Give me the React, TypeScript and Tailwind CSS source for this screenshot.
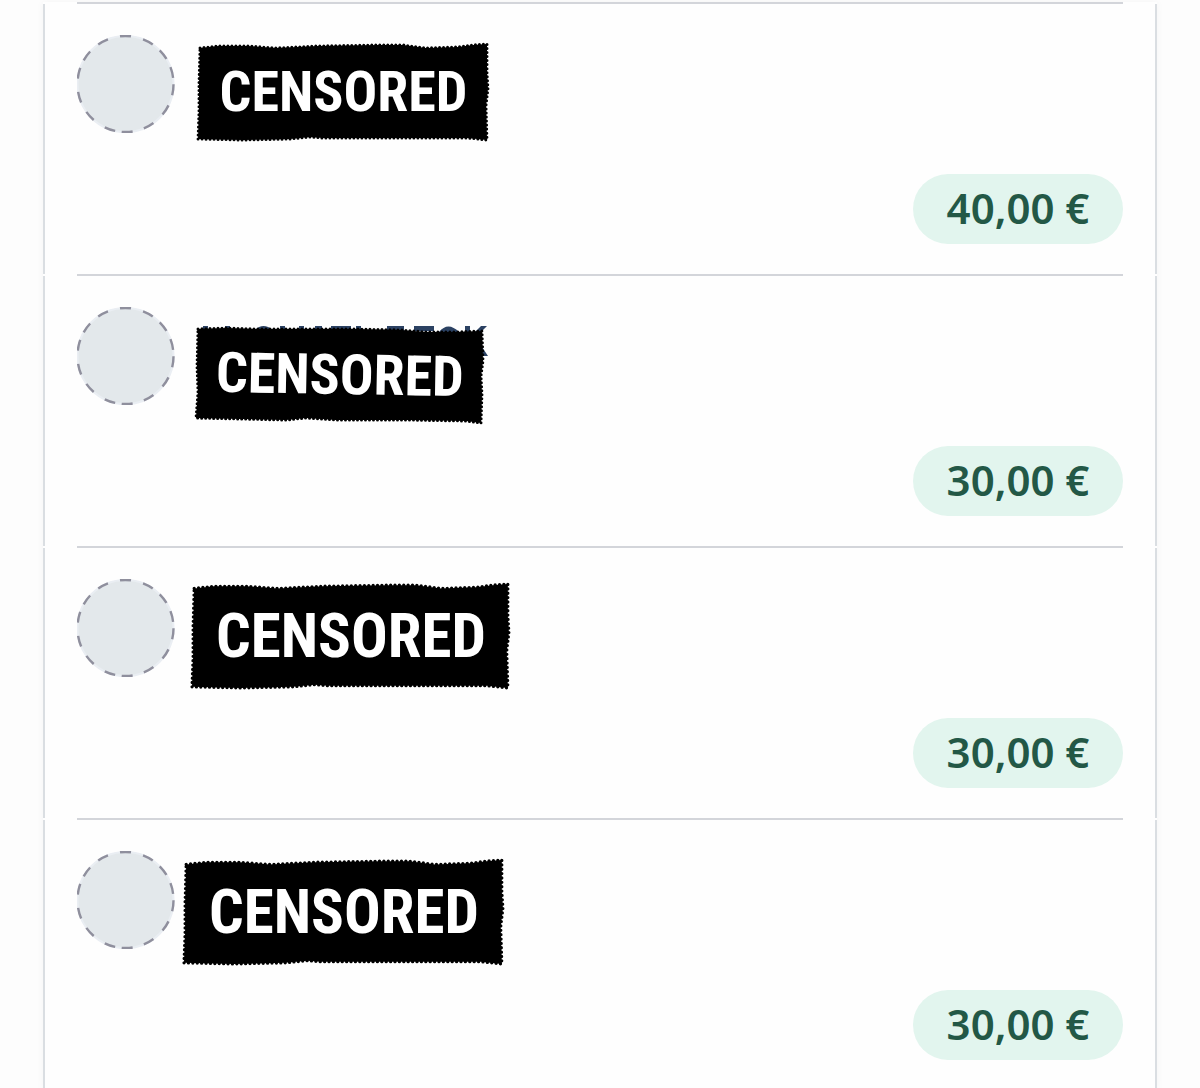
type Entry = {
  amount: string;
  patch: string;
  label: string;
  exposed?: boolean;
};

const entries: Entry[] = [
  { amount: "40,00 €", patch: "mt-[41px] ml-[23px] h-[98px] w-[291px]", label: "text-[56px]" },
  { amount: "30,00 €", patch: "mt-[52px] ml-[21px] h-[98px] w-[288px]", label: "text-[56px] rotate-1", exposed: true },
  { amount: "30,00 €", patch: "mt-[37px] ml-[17px] h-[106px] w-[318px]", label: "text-[61px]" },
  { amount: "30,00 €", patch: "mt-[41px] ml-[9px] h-[106px] w-[320px]", label: "text-[61px]" },
];

const straightPatch =
  "M2 5 L20 3 L50 3 L78 5 L120 3 L180 2 L205 2 L228 5 L260 4 L275 2 L289 1 L289 30 L290 45 L288 62 L289 96 L270 94 L210 94 L125 94 L112 93 L92 95 L45 96 L0 95 L1 68 L1 40 Z";
const tiltedPatch =
  "M2 3 L30 2 L60 3 L105 3 L160 3 L205 4 L230 6 L260 6 L286 5 L287 35 L285 50 L286 68 L285 97 L270 95 L210 94 L140 94 L110 92 L90 94 L45 93 L0 92 L2 66 L1 40 Z";

function Patch({ className, label, exposed }: { className: string; label: string; exposed?: boolean }) {
  const d = exposed ? tiltedPatch : straightPatch;
  return (
    <div className={`relative flex shrink-0 items-center justify-center ${className}`}>
      {exposed && (
        <svg
          className="absolute inset-0 h-full w-full overflow-visible"
          viewBox="0 0 288 98"
          fill="#2b4162"
          aria-hidden="true"
        >
          <path d="M7 0h5v4h-5zM29 0h5v4h-5zM59 4q8-8 18 0zM84 0h5v5h-5zM103 0h5v5h-5zM119 0h7v5h-7zM135 0h20v4h-20zM160 0h5v5h-5zM191 0h17v5h-17zM218 0h20v5h-20zM243 6q9-11 20 0zM269 0h5v6h-5zM285 0h6l-6 6h-6zM284 18l8 12h-6l-4-6z" />
        </svg>
      )}
      <svg
        className="absolute inset-0 h-full w-full overflow-visible"
        viewBox={exposed ? "0 0 288 98" : "0 0 291 97"}
        preserveAspectRatio="none"
        aria-hidden="true"
      >
        <path d={d} fill="#000" />
        <path d={d} fill="none" stroke="#000" strokeWidth="3" strokeLinecap="round" strokeDasharray="0 4" />
      </svg>
      <span
        className={`relative font-['Roboto_Condensed','Liberation_Sans_Narrow','Liberation_Sans',sans-serif] leading-none font-bold text-white ${label}`}
      >
        CENSORED
      </span>
    </div>
  );
}

const dashAngles = [0, 28, 52, 76, 97, 123, 151, 178, 199, 228, 254, 283, 306, 332];

function Avatar() {
  return (
    <svg className="mt-[33px] size-[98px] shrink-0" viewBox="0 0 98 98" aria-hidden="true">
      <circle cx="48.5" cy="49" r="48.5" fill="#e3e8eb" />
      <circle cx="48.5" cy="49" r="48" fill="none" stroke="#eaeef3" strokeWidth="2" />
      {dashAngles.map((angle) => (
        <path
          key={angle}
          d="M43 1.300Q48.500 .6 54 1.300"
          transform={`rotate(${angle} 48.5 49)`}
          fill="none"
          stroke="#8f8f9d"
          strokeWidth="2.400"
        />
      ))}
    </svg>
  );
}

export default function App() {
  return (
    <main className="min-h-screen overflow-hidden bg-[#fdfdfd] px-[43px] pt-[2px] font-['Noto_Sans',sans-serif]">
      <ul className="bg-[#fefefe] shadow-[0_0_8px_rgba(0,0,0,0.04)]">
        {entries.map((entry, i) => (
          <li key={i}>
            <div className="px-[34px]">
              <hr className="h-[2px] border-0 bg-[#d3d5da]" />
            </div>
            <div className="flex h-[270px] flex-col justify-between border-x-2 border-[#dadee2] px-8 pb-[30px]">
              <div className="-mt-[2px] flex items-start">
                <Avatar />
                <Patch className={entry.patch} label={entry.label} exposed={entry.exposed} />
              </div>
              <span className="flex h-[70px] w-[210px] items-center justify-center self-end rounded-full bg-[#e2f5ee] pb-[2px] text-[42px] leading-none font-semibold text-[#235846]">
                {entry.amount}
              </span>
            </div>
          </li>
        ))}
      </ul>
    </main>
  );
}
